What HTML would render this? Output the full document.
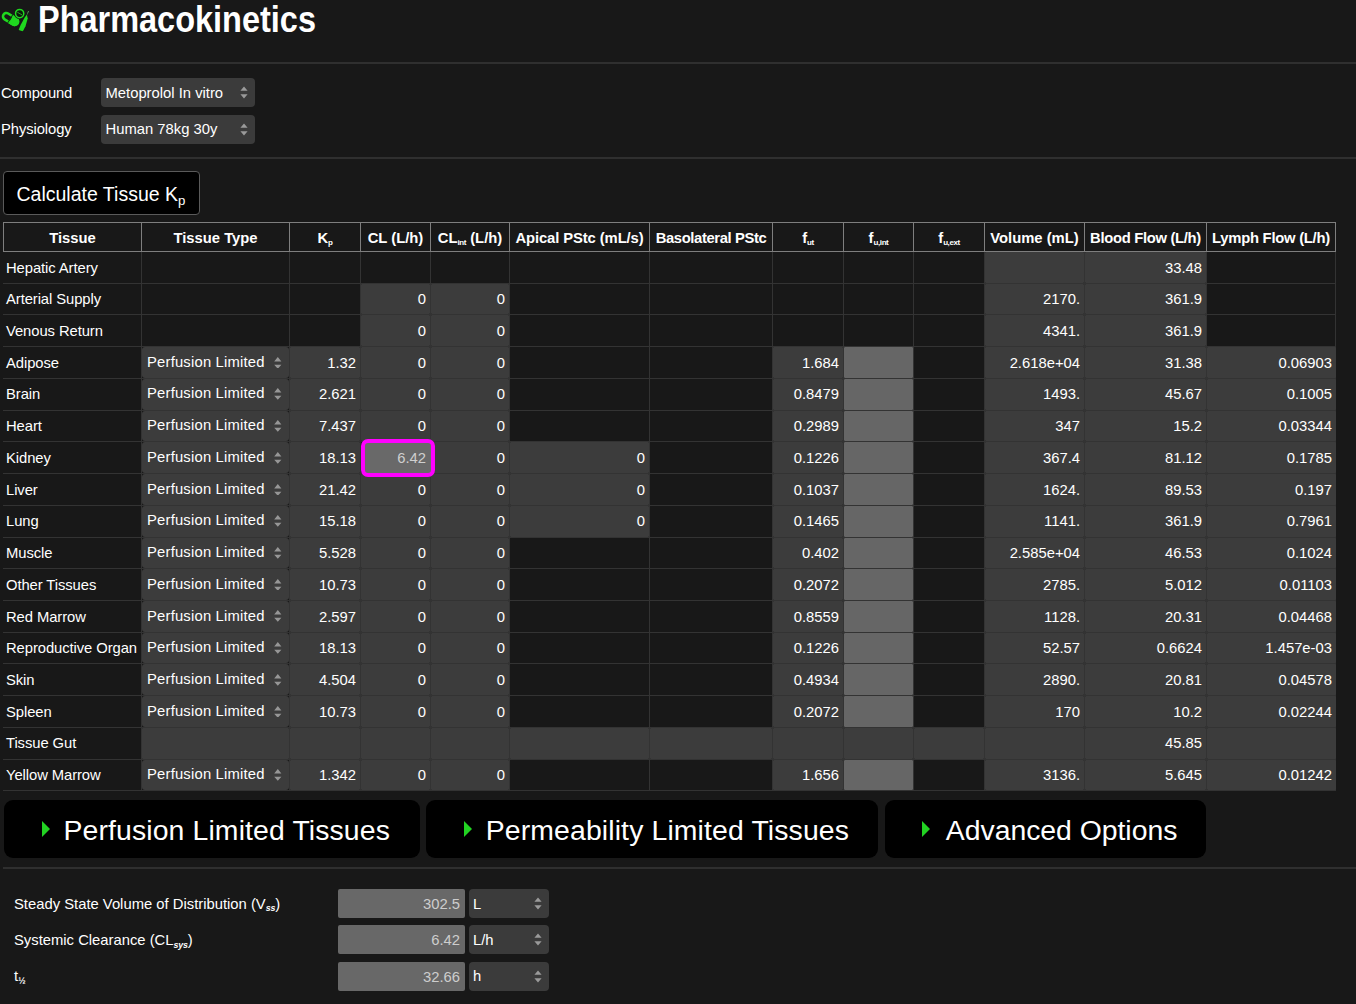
<!DOCTYPE html>
<html lang="en"><head><meta charset="utf-8"><title>Pharmacokinetics</title>
<style>
html,body{margin:0;padding:0;background:#181818;}
body{width:1356px;height:1004px;position:relative;overflow:hidden;color:#fff;font-family:"Liberation Sans",sans-serif;font-size:14.8px;}
*{box-sizing:border-box;}
.abs{position:absolute;}
h1{position:absolute;left:37.5px;top:0.2px;margin:0;font-size:36px;font-weight:bold;line-height:40px;white-space:nowrap;transform:scaleX(0.902);transform-origin:0 0;}
hr{position:absolute;left:0;width:1356px;height:2px;margin:0;border:0;background:#2f2f2f;}
label{position:absolute;white-space:nowrap;line-height:20px;}
.sel{position:absolute;background:#3b3b3b;border-radius:4px;line-height:20px;white-space:nowrap;}
.sel span{position:absolute;left:4.5px;top:50%;margin-top:-10px;}
.ar{position:absolute;width:8px;height:13px;fill:#9a9a9a;}
.btn{position:absolute;background:#000;border:1px solid #5a5a5a;border-radius:4px;font-size:19.5px;white-space:nowrap;}
sub{font-size:68%;vertical-align:baseline;position:relative;top:0.32em;letter-spacing:-0.3px;}
#grid{position:absolute;left:0;top:0;}
.gl{position:absolute;background:#333333;}
.hl{position:absolute;background:#7e7e7e;}
.c{position:absolute;white-space:nowrap;line-height:20px;overflow:hidden;}
.c.n{text-align:right;padding-right:4px;}
.c.t{padding-left:4px;}
.c.h{text-align:center;font-weight:bold;}
.c span{position:relative;}
.c.h sub{font-size:54%;letter-spacing:-0.4px;top:0.28em;}
label sub{font-size:60%;font-weight:bold;letter-spacing:-0.2px;}
.m{background:#3c3c3c;border-radius:1px;}
.l{background:#666666;border-radius:1px;}
.g{background:#3d3d3d;border-radius:1px;}
.big{position:absolute;top:800px;height:58px;background:#000;border-radius:9px;font-size:28.4px;line-height:58px;white-space:nowrap;}
.big i{position:absolute;top:21px;width:0;height:0;border-left:8px solid #22d322;border-top:8.5px solid transparent;border-bottom:8.5px solid transparent;}
.big span{position:absolute;top:0.5px;}
.inp{position:absolute;left:338px;width:127px;height:29px;background:#686868;border-radius:2px;color:#cdcdcd;text-align:right;padding-right:5px;line-height:31px;}
</style></head><body>
<svg class="abs" style="left:0;top:4px" width="32" height="30" viewBox="0 4 32 30">
<g transform="translate(10.5 18.95) rotate(31.7)">
<rect x="-8.25" y="-3.4" width="16.5" height="6.8" rx="3.4" fill="none" stroke="#1fd81f" stroke-width="2.6"/>
<path d="M0.4 -4.7 H4.85 A4.7 4.7 0 0 1 4.85 4.7 H0.4 Z" fill="#1fd81f"/>
<path d="M-0.3 -5 V5" stroke="#0c3a0c" stroke-width="0.9"/>
</g>
<circle cx="19.65" cy="13.55" r="5.5" fill="#181818"/>
<circle cx="19.65" cy="13.55" r="4.1" fill="#0a1c0a" stroke="#1fd81f" stroke-width="1.5"/>
<path d="M17.3 12.2 L22 14.9" stroke="#35a035" stroke-width="0.9"/>
<path d="M28.6 11 L26.9 15" stroke-width="0.8" stroke="#5fae5f"/>
<path d="M26.9 14.5 L27.7 18.5 L25.5 26.3 L23.3 30.6 L22.5 31.3 L18.7 29.9 L19.2 28.6 L20.6 25 L24.7 17.4 Z" fill="#1fd81f" stroke="#181818" stroke-width="1.2" paint-order="stroke"/>
</svg>
<h1>Pharmacokinetics</h1>
<hr style="top:62px">
<label style="left:1px;top:83px;letter-spacing:-0.15px">Compound</label>
<div class="sel" style="left:101px;top:78px;width:154px;height:29px"><span>Metoprolol In vitro</span><svg class="ar" style="right:7px;top:8px" viewBox="0 0 8 13"><path d="M4 0.4 L7.6 4.8 H0.4 Z M4 12.6 L0.4 8.2 H7.6 Z"/></svg></div>
<label style="left:1px;top:119.3px;letter-spacing:-0.1px">Physiology</label>
<div class="sel" style="left:101px;top:114.5px;width:154px;height:29px"><span>Human 78kg 30y</span><svg class="ar" style="right:7px;top:8px" viewBox="0 0 8 13"><path d="M4 0.4 L7.6 4.8 H0.4 Z M4 12.6 L0.4 8.2 H7.6 Z"/></svg></div>
<hr style="top:157px">
<div class="btn" style="left:3px;top:171px;width:197px;height:44px;line-height:44px;padding-left:12.5px">Calculate Tissue K<sub>p</sub></div>
<div id="grid">
<div class="gl" style="left:3px;top:282.73px;width:1333px;height:1px"></div><div class="gl" style="left:3px;top:314.46px;width:1333px;height:1px"></div><div class="gl" style="left:3px;top:346.19px;width:1333px;height:1px"></div><div class="gl" style="left:3px;top:377.92px;width:1333px;height:1px"></div><div class="gl" style="left:3px;top:409.65px;width:1333px;height:1px"></div><div class="gl" style="left:3px;top:441.38px;width:1333px;height:1px"></div><div class="gl" style="left:3px;top:473.11px;width:1333px;height:1px"></div><div class="gl" style="left:3px;top:504.84px;width:1333px;height:1px"></div><div class="gl" style="left:3px;top:536.57px;width:1333px;height:1px"></div><div class="gl" style="left:3px;top:568.3px;width:1333px;height:1px"></div><div class="gl" style="left:3px;top:600.03px;width:1333px;height:1px"></div><div class="gl" style="left:3px;top:631.76px;width:1333px;height:1px"></div><div class="gl" style="left:3px;top:663.49px;width:1333px;height:1px"></div><div class="gl" style="left:3px;top:695.22px;width:1333px;height:1px"></div><div class="gl" style="left:3px;top:726.95px;width:1333px;height:1px"></div><div class="gl" style="left:3px;top:758.68px;width:1333px;height:1px"></div><div class="gl" style="left:3px;top:790.41px;width:1333px;height:1px"></div><div class="gl" style="left:141px;top:251px;width:1px;height:539.41px"></div><div class="gl" style="left:289px;top:251px;width:1px;height:539.41px"></div><div class="gl" style="left:360px;top:251px;width:1px;height:539.41px"></div><div class="gl" style="left:430px;top:251px;width:1px;height:539.41px"></div><div class="gl" style="left:509px;top:251px;width:1px;height:539.41px"></div><div class="gl" style="left:649px;top:251px;width:1px;height:539.41px"></div><div class="gl" style="left:772px;top:251px;width:1px;height:539.41px"></div><div class="gl" style="left:843px;top:251px;width:1px;height:539.41px"></div><div class="gl" style="left:913px;top:251px;width:1px;height:539.41px"></div><div class="gl" style="left:984px;top:251px;width:1px;height:539.41px"></div><div class="gl" style="left:1084px;top:251px;width:1px;height:539.41px"></div><div class="gl" style="left:1206px;top:251px;width:1px;height:539.41px"></div><div class="gl" style="left:1335px;top:251px;width:1px;height:539.41px"></div>
<div class="hl" style="left:3px;top:222px;width:1333px;height:1px"></div><div class="hl" style="left:3px;top:251px;width:1333px;height:1px"></div><div class="hl" style="left:3px;top:222px;width:1px;height:30px"></div><div class="hl" style="left:141px;top:222px;width:1px;height:30px"></div><div class="hl" style="left:289px;top:222px;width:1px;height:30px"></div><div class="hl" style="left:360px;top:222px;width:1px;height:30px"></div><div class="hl" style="left:430px;top:222px;width:1px;height:30px"></div><div class="hl" style="left:509px;top:222px;width:1px;height:30px"></div><div class="hl" style="left:649px;top:222px;width:1px;height:30px"></div><div class="hl" style="left:772px;top:222px;width:1px;height:30px"></div><div class="hl" style="left:843px;top:222px;width:1px;height:30px"></div><div class="hl" style="left:913px;top:222px;width:1px;height:30px"></div><div class="hl" style="left:984px;top:222px;width:1px;height:30px"></div><div class="hl" style="left:1084px;top:222px;width:1px;height:30px"></div><div class="hl" style="left:1206px;top:222px;width:1px;height:30px"></div><div class="hl" style="left:1335px;top:222px;width:1px;height:30px"></div>
<div class="c h" style="left:4px;top:223px;width:137px;height:28px;padding-top:5px"><span>Tissue</span></div><div class="c h" style="left:142px;top:223px;width:147px;height:28px;padding-top:5px"><span>Tissue Type</span></div><div class="c h" style="left:290px;top:223px;width:70px;height:28px;padding-top:5px"><span>K<sub>p</sub></span></div><div class="c h" style="left:361px;top:223px;width:69px;height:28px;padding-top:5px"><span>CL (L/h)</span></div><div class="c h" style="left:431px;top:223px;width:78px;height:28px;padding-top:5px"><span>CL<sub>int</sub> (L/h)</span></div><div class="c h" style="left:510px;top:223px;width:139px;height:28px;padding-top:5px"><span><span style='letter-spacing:-0.1px'>Apical PStc (mL/s)</span></span></div><div class="c h" style="left:650px;top:223px;width:122px;height:28px;padding-top:5px"><span><span style='letter-spacing:-0.38px'>Basolateral PStc</span></span></div><div class="c h" style="left:773px;top:223px;width:70px;height:28px;padding-top:5px"><span>f<sub>ut</sub></span></div><div class="c h" style="left:844px;top:223px;width:69px;height:28px;padding-top:5px"><span>f<sub>u,int</sub></span></div><div class="c h" style="left:914px;top:223px;width:70px;height:28px;padding-top:5px"><span>f<sub>u,ext</sub></span></div><div class="c h" style="left:985px;top:223px;width:99px;height:28px;padding-top:5px"><span>Volume (mL)</span></div><div class="c h" style="left:1085px;top:223px;width:121px;height:28px;padding-top:5px"><span><span style='letter-spacing:-0.32px'>Blood Flow (L/h)</span></span></div><div class="c h" style="left:1207px;top:223px;width:128px;height:28px;padding-top:5px"><span><span style='letter-spacing:-0.25px'>Lymph Flow (L/h)</span></span></div>
<div class="c t" style="left:4px;top:252px;width:137px;height:30.73px;padding-top:5.5px;padding-left:2px;letter-spacing:-0.08px">Hepatic Artery</div><div class="c m n" style="left:985px;top:252px;width:99px;height:30.73px;padding-top:5.5px"></div><div class="c m n" style="left:1085px;top:252px;width:121px;height:30.73px;padding-top:5.5px">33.48</div>
<div class="c t" style="left:4px;top:283.73px;width:137px;height:30.73px;padding-top:5.5px;padding-left:2px;letter-spacing:-0.08px">Arterial Supply</div><div class="c m n" style="left:361px;top:283.73px;width:69px;height:30.73px;padding-top:5.5px">0</div><div class="c m n" style="left:431px;top:283.73px;width:78px;height:30.73px;padding-top:5.5px">0</div><div class="c m n" style="left:985px;top:283.73px;width:99px;height:30.73px;padding-top:5.5px">2170.</div><div class="c m n" style="left:1085px;top:283.73px;width:121px;height:30.73px;padding-top:5.5px">361.9</div>
<div class="c t" style="left:4px;top:315.46px;width:137px;height:30.73px;padding-top:5.5px;padding-left:2px;letter-spacing:-0.08px">Venous Return</div><div class="c m n" style="left:361px;top:315.46px;width:69px;height:30.73px;padding-top:5.5px">0</div><div class="c m n" style="left:431px;top:315.46px;width:78px;height:30.73px;padding-top:5.5px">0</div><div class="c m n" style="left:985px;top:315.46px;width:99px;height:30.73px;padding-top:5.5px">4341.</div><div class="c m n" style="left:1085px;top:315.46px;width:121px;height:30.73px;padding-top:5.5px">361.9</div>
<div class="c t" style="left:4px;top:347.19px;width:137px;height:30.73px;padding-top:5.5px;padding-left:2px;letter-spacing:-0.08px">Adipose</div><div class="c m t" style="left:142px;top:347.19px;width:147px;height:30.73px;border-radius:3px;padding-top:4.5px;padding-left:5px;letter-spacing:0.2px">Perfusion Limited<svg class="ar" style="right:7px;top:9.4px;width:7.6px;height:11.8px;fill:#969696" viewBox="0 0 7.6 11.8"><path d="M3.8 0 L7.4 4.4 H0.2 Z M3.8 11.8 L0.2 7.7 H7.4 Z"/></svg></div><div class="c m n" style="left:290px;top:347.19px;width:70px;height:30.73px;padding-top:5.5px">1.32</div><div class="c m n" style="left:361px;top:347.19px;width:69px;height:30.73px;padding-top:5.5px">0</div><div class="c m n" style="left:431px;top:347.19px;width:78px;height:30.73px;padding-top:5.5px">0</div><div class="c m n" style="left:773px;top:347.19px;width:70px;height:30.73px;padding-top:5.5px">1.684</div><div class="c l" style="left:844px;top:347.19px;width:69px;height:30.73px;"></div><div class="c m n" style="left:985px;top:347.19px;width:99px;height:30.73px;padding-top:5.5px">2.618e+04</div><div class="c m n" style="left:1085px;top:347.19px;width:121px;height:30.73px;padding-top:5.5px">31.38</div><div class="c m n" style="left:1207px;top:347.19px;width:129px;height:30.73px;padding-top:5.5px">0.06903</div>
<div class="c t" style="left:4px;top:378.92px;width:137px;height:30.73px;padding-top:5.5px;padding-left:2px;letter-spacing:-0.08px">Brain</div><div class="c m t" style="left:142px;top:378.92px;width:147px;height:30.73px;border-radius:3px;padding-top:4.5px;padding-left:5px;letter-spacing:0.2px">Perfusion Limited<svg class="ar" style="right:7px;top:9.4px;width:7.6px;height:11.8px;fill:#969696" viewBox="0 0 7.6 11.8"><path d="M3.8 0 L7.4 4.4 H0.2 Z M3.8 11.8 L0.2 7.7 H7.4 Z"/></svg></div><div class="c m n" style="left:290px;top:378.92px;width:70px;height:30.73px;padding-top:5.5px">2.621</div><div class="c m n" style="left:361px;top:378.92px;width:69px;height:30.73px;padding-top:5.5px">0</div><div class="c m n" style="left:431px;top:378.92px;width:78px;height:30.73px;padding-top:5.5px">0</div><div class="c m n" style="left:773px;top:378.92px;width:70px;height:30.73px;padding-top:5.5px">0.8479</div><div class="c l" style="left:844px;top:378.92px;width:69px;height:30.73px;"></div><div class="c m n" style="left:985px;top:378.92px;width:99px;height:30.73px;padding-top:5.5px">1493.</div><div class="c m n" style="left:1085px;top:378.92px;width:121px;height:30.73px;padding-top:5.5px">45.67</div><div class="c m n" style="left:1207px;top:378.92px;width:129px;height:30.73px;padding-top:5.5px">0.1005</div>
<div class="c t" style="left:4px;top:410.65px;width:137px;height:30.73px;padding-top:5.5px;padding-left:2px;letter-spacing:-0.08px">Heart</div><div class="c m t" style="left:142px;top:410.65px;width:147px;height:30.73px;border-radius:3px;padding-top:4.5px;padding-left:5px;letter-spacing:0.2px">Perfusion Limited<svg class="ar" style="right:7px;top:9.4px;width:7.6px;height:11.8px;fill:#969696" viewBox="0 0 7.6 11.8"><path d="M3.8 0 L7.4 4.4 H0.2 Z M3.8 11.8 L0.2 7.7 H7.4 Z"/></svg></div><div class="c m n" style="left:290px;top:410.65px;width:70px;height:30.73px;padding-top:5.5px">7.437</div><div class="c m n" style="left:361px;top:410.65px;width:69px;height:30.73px;padding-top:5.5px">0</div><div class="c m n" style="left:431px;top:410.65px;width:78px;height:30.73px;padding-top:5.5px">0</div><div class="c m n" style="left:773px;top:410.65px;width:70px;height:30.73px;padding-top:5.5px">0.2989</div><div class="c l" style="left:844px;top:410.65px;width:69px;height:30.73px;"></div><div class="c m n" style="left:985px;top:410.65px;width:99px;height:30.73px;padding-top:5.5px">347</div><div class="c m n" style="left:1085px;top:410.65px;width:121px;height:30.73px;padding-top:5.5px">15.2</div><div class="c m n" style="left:1207px;top:410.65px;width:129px;height:30.73px;padding-top:5.5px">0.03344</div>
<div class="c t" style="left:4px;top:442.38px;width:137px;height:30.73px;padding-top:5.5px;padding-left:2px;letter-spacing:-0.08px">Kidney</div><div class="c m t" style="left:142px;top:442.38px;width:147px;height:30.73px;border-radius:3px;padding-top:4.5px;padding-left:5px;letter-spacing:0.2px">Perfusion Limited<svg class="ar" style="right:7px;top:9.4px;width:7.6px;height:11.8px;fill:#969696" viewBox="0 0 7.6 11.8"><path d="M3.8 0 L7.4 4.4 H0.2 Z M3.8 11.8 L0.2 7.7 H7.4 Z"/></svg></div><div class="c m n" style="left:290px;top:442.38px;width:70px;height:30.73px;padding-top:5.5px">18.13</div><div class="c n" style="left:361px;top:439.08px;width:74px;height:38px;border:4px solid #ff00ff;border-radius:7px;background:#696969;color:#cfcfcf;padding-top:5px;padding-right:5px;z-index:3">6.42</div><div class="c m n" style="left:431px;top:442.38px;width:78px;height:30.73px;padding-top:5.5px">0</div><div class="c m n" style="left:510px;top:442.38px;width:139px;height:30.73px;padding-top:5.5px">0</div><div class="c m n" style="left:773px;top:442.38px;width:70px;height:30.73px;padding-top:5.5px">0.1226</div><div class="c l" style="left:844px;top:442.38px;width:69px;height:30.73px;"></div><div class="c m n" style="left:985px;top:442.38px;width:99px;height:30.73px;padding-top:5.5px">367.4</div><div class="c m n" style="left:1085px;top:442.38px;width:121px;height:30.73px;padding-top:5.5px">81.12</div><div class="c m n" style="left:1207px;top:442.38px;width:129px;height:30.73px;padding-top:5.5px">0.1785</div>
<div class="c t" style="left:4px;top:474.11px;width:137px;height:30.73px;padding-top:5.5px;padding-left:2px;letter-spacing:-0.08px">Liver</div><div class="c m t" style="left:142px;top:474.11px;width:147px;height:30.73px;border-radius:3px;padding-top:4.5px;padding-left:5px;letter-spacing:0.2px">Perfusion Limited<svg class="ar" style="right:7px;top:9.4px;width:7.6px;height:11.8px;fill:#969696" viewBox="0 0 7.6 11.8"><path d="M3.8 0 L7.4 4.4 H0.2 Z M3.8 11.8 L0.2 7.7 H7.4 Z"/></svg></div><div class="c m n" style="left:290px;top:474.11px;width:70px;height:30.73px;padding-top:5.5px">21.42</div><div class="c m n" style="left:361px;top:474.11px;width:69px;height:30.73px;padding-top:5.5px">0</div><div class="c m n" style="left:431px;top:474.11px;width:78px;height:30.73px;padding-top:5.5px">0</div><div class="c m n" style="left:510px;top:474.11px;width:139px;height:30.73px;padding-top:5.5px">0</div><div class="c m n" style="left:773px;top:474.11px;width:70px;height:30.73px;padding-top:5.5px">0.1037</div><div class="c l" style="left:844px;top:474.11px;width:69px;height:30.73px;"></div><div class="c m n" style="left:985px;top:474.11px;width:99px;height:30.73px;padding-top:5.5px">1624.</div><div class="c m n" style="left:1085px;top:474.11px;width:121px;height:30.73px;padding-top:5.5px">89.53</div><div class="c m n" style="left:1207px;top:474.11px;width:129px;height:30.73px;padding-top:5.5px">0.197</div>
<div class="c t" style="left:4px;top:505.84px;width:137px;height:30.73px;padding-top:5.5px;padding-left:2px;letter-spacing:-0.08px">Lung</div><div class="c m t" style="left:142px;top:505.84px;width:147px;height:30.73px;border-radius:3px;padding-top:4.5px;padding-left:5px;letter-spacing:0.2px">Perfusion Limited<svg class="ar" style="right:7px;top:9.4px;width:7.6px;height:11.8px;fill:#969696" viewBox="0 0 7.6 11.8"><path d="M3.8 0 L7.4 4.4 H0.2 Z M3.8 11.8 L0.2 7.7 H7.4 Z"/></svg></div><div class="c m n" style="left:290px;top:505.84px;width:70px;height:30.73px;padding-top:5.5px">15.18</div><div class="c m n" style="left:361px;top:505.84px;width:69px;height:30.73px;padding-top:5.5px">0</div><div class="c m n" style="left:431px;top:505.84px;width:78px;height:30.73px;padding-top:5.5px">0</div><div class="c m n" style="left:510px;top:505.84px;width:139px;height:30.73px;padding-top:5.5px">0</div><div class="c m n" style="left:773px;top:505.84px;width:70px;height:30.73px;padding-top:5.5px">0.1465</div><div class="c l" style="left:844px;top:505.84px;width:69px;height:30.73px;"></div><div class="c m n" style="left:985px;top:505.84px;width:99px;height:30.73px;padding-top:5.5px">1141.</div><div class="c m n" style="left:1085px;top:505.84px;width:121px;height:30.73px;padding-top:5.5px">361.9</div><div class="c m n" style="left:1207px;top:505.84px;width:129px;height:30.73px;padding-top:5.5px">0.7961</div>
<div class="c t" style="left:4px;top:537.57px;width:137px;height:30.73px;padding-top:5.5px;padding-left:2px;letter-spacing:-0.08px">Muscle</div><div class="c m t" style="left:142px;top:537.57px;width:147px;height:30.73px;border-radius:3px;padding-top:4.5px;padding-left:5px;letter-spacing:0.2px">Perfusion Limited<svg class="ar" style="right:7px;top:9.4px;width:7.6px;height:11.8px;fill:#969696" viewBox="0 0 7.6 11.8"><path d="M3.8 0 L7.4 4.4 H0.2 Z M3.8 11.8 L0.2 7.7 H7.4 Z"/></svg></div><div class="c m n" style="left:290px;top:537.57px;width:70px;height:30.73px;padding-top:5.5px">5.528</div><div class="c m n" style="left:361px;top:537.57px;width:69px;height:30.73px;padding-top:5.5px">0</div><div class="c m n" style="left:431px;top:537.57px;width:78px;height:30.73px;padding-top:5.5px">0</div><div class="c m n" style="left:773px;top:537.57px;width:70px;height:30.73px;padding-top:5.5px">0.402</div><div class="c l" style="left:844px;top:537.57px;width:69px;height:30.73px;"></div><div class="c m n" style="left:985px;top:537.57px;width:99px;height:30.73px;padding-top:5.5px">2.585e+04</div><div class="c m n" style="left:1085px;top:537.57px;width:121px;height:30.73px;padding-top:5.5px">46.53</div><div class="c m n" style="left:1207px;top:537.57px;width:129px;height:30.73px;padding-top:5.5px">0.1024</div>
<div class="c t" style="left:4px;top:569.3px;width:137px;height:30.73px;padding-top:5.5px;padding-left:2px;letter-spacing:-0.08px">Other Tissues</div><div class="c m t" style="left:142px;top:569.3px;width:147px;height:30.73px;border-radius:3px;padding-top:4.5px;padding-left:5px;letter-spacing:0.2px">Perfusion Limited<svg class="ar" style="right:7px;top:9.4px;width:7.6px;height:11.8px;fill:#969696" viewBox="0 0 7.6 11.8"><path d="M3.8 0 L7.4 4.4 H0.2 Z M3.8 11.8 L0.2 7.7 H7.4 Z"/></svg></div><div class="c m n" style="left:290px;top:569.3px;width:70px;height:30.73px;padding-top:5.5px">10.73</div><div class="c m n" style="left:361px;top:569.3px;width:69px;height:30.73px;padding-top:5.5px">0</div><div class="c m n" style="left:431px;top:569.3px;width:78px;height:30.73px;padding-top:5.5px">0</div><div class="c m n" style="left:773px;top:569.3px;width:70px;height:30.73px;padding-top:5.5px">0.2072</div><div class="c l" style="left:844px;top:569.3px;width:69px;height:30.73px;"></div><div class="c m n" style="left:985px;top:569.3px;width:99px;height:30.73px;padding-top:5.5px">2785.</div><div class="c m n" style="left:1085px;top:569.3px;width:121px;height:30.73px;padding-top:5.5px">5.012</div><div class="c m n" style="left:1207px;top:569.3px;width:129px;height:30.73px;padding-top:5.5px">0.01103</div>
<div class="c t" style="left:4px;top:601.03px;width:137px;height:30.73px;padding-top:5.5px;padding-left:2px;letter-spacing:-0.08px">Red Marrow</div><div class="c m t" style="left:142px;top:601.03px;width:147px;height:30.73px;border-radius:3px;padding-top:4.5px;padding-left:5px;letter-spacing:0.2px">Perfusion Limited<svg class="ar" style="right:7px;top:9.4px;width:7.6px;height:11.8px;fill:#969696" viewBox="0 0 7.6 11.8"><path d="M3.8 0 L7.4 4.4 H0.2 Z M3.8 11.8 L0.2 7.7 H7.4 Z"/></svg></div><div class="c m n" style="left:290px;top:601.03px;width:70px;height:30.73px;padding-top:5.5px">2.597</div><div class="c m n" style="left:361px;top:601.03px;width:69px;height:30.73px;padding-top:5.5px">0</div><div class="c m n" style="left:431px;top:601.03px;width:78px;height:30.73px;padding-top:5.5px">0</div><div class="c m n" style="left:773px;top:601.03px;width:70px;height:30.73px;padding-top:5.5px">0.8559</div><div class="c l" style="left:844px;top:601.03px;width:69px;height:30.73px;"></div><div class="c m n" style="left:985px;top:601.03px;width:99px;height:30.73px;padding-top:5.5px">1128.</div><div class="c m n" style="left:1085px;top:601.03px;width:121px;height:30.73px;padding-top:5.5px">20.31</div><div class="c m n" style="left:1207px;top:601.03px;width:129px;height:30.73px;padding-top:5.5px">0.04468</div>
<div class="c t" style="left:4px;top:632.76px;width:137px;height:30.73px;padding-top:5.5px;padding-left:2px;letter-spacing:-0.08px">Reproductive Organ</div><div class="c m t" style="left:142px;top:632.76px;width:147px;height:30.73px;border-radius:3px;padding-top:4.5px;padding-left:5px;letter-spacing:0.2px">Perfusion Limited<svg class="ar" style="right:7px;top:9.4px;width:7.6px;height:11.8px;fill:#969696" viewBox="0 0 7.6 11.8"><path d="M3.8 0 L7.4 4.4 H0.2 Z M3.8 11.8 L0.2 7.7 H7.4 Z"/></svg></div><div class="c m n" style="left:290px;top:632.76px;width:70px;height:30.73px;padding-top:5.5px">18.13</div><div class="c m n" style="left:361px;top:632.76px;width:69px;height:30.73px;padding-top:5.5px">0</div><div class="c m n" style="left:431px;top:632.76px;width:78px;height:30.73px;padding-top:5.5px">0</div><div class="c m n" style="left:773px;top:632.76px;width:70px;height:30.73px;padding-top:5.5px">0.1226</div><div class="c l" style="left:844px;top:632.76px;width:69px;height:30.73px;"></div><div class="c m n" style="left:985px;top:632.76px;width:99px;height:30.73px;padding-top:5.5px">52.57</div><div class="c m n" style="left:1085px;top:632.76px;width:121px;height:30.73px;padding-top:5.5px">0.6624</div><div class="c m n" style="left:1207px;top:632.76px;width:129px;height:30.73px;padding-top:5.5px">1.457e-03</div>
<div class="c t" style="left:4px;top:664.49px;width:137px;height:30.73px;padding-top:5.5px;padding-left:2px;letter-spacing:-0.08px">Skin</div><div class="c m t" style="left:142px;top:664.49px;width:147px;height:30.73px;border-radius:3px;padding-top:4.5px;padding-left:5px;letter-spacing:0.2px">Perfusion Limited<svg class="ar" style="right:7px;top:9.4px;width:7.6px;height:11.8px;fill:#969696" viewBox="0 0 7.6 11.8"><path d="M3.8 0 L7.4 4.4 H0.2 Z M3.8 11.8 L0.2 7.7 H7.4 Z"/></svg></div><div class="c m n" style="left:290px;top:664.49px;width:70px;height:30.73px;padding-top:5.5px">4.504</div><div class="c m n" style="left:361px;top:664.49px;width:69px;height:30.73px;padding-top:5.5px">0</div><div class="c m n" style="left:431px;top:664.49px;width:78px;height:30.73px;padding-top:5.5px">0</div><div class="c m n" style="left:773px;top:664.49px;width:70px;height:30.73px;padding-top:5.5px">0.4934</div><div class="c l" style="left:844px;top:664.49px;width:69px;height:30.73px;"></div><div class="c m n" style="left:985px;top:664.49px;width:99px;height:30.73px;padding-top:5.5px">2890.</div><div class="c m n" style="left:1085px;top:664.49px;width:121px;height:30.73px;padding-top:5.5px">20.81</div><div class="c m n" style="left:1207px;top:664.49px;width:129px;height:30.73px;padding-top:5.5px">0.04578</div>
<div class="c t" style="left:4px;top:696.22px;width:137px;height:30.73px;padding-top:5.5px;padding-left:2px;letter-spacing:-0.08px">Spleen</div><div class="c m t" style="left:142px;top:696.22px;width:147px;height:30.73px;border-radius:3px;padding-top:4.5px;padding-left:5px;letter-spacing:0.2px">Perfusion Limited<svg class="ar" style="right:7px;top:9.4px;width:7.6px;height:11.8px;fill:#969696" viewBox="0 0 7.6 11.8"><path d="M3.8 0 L7.4 4.4 H0.2 Z M3.8 11.8 L0.2 7.7 H7.4 Z"/></svg></div><div class="c m n" style="left:290px;top:696.22px;width:70px;height:30.73px;padding-top:5.5px">10.73</div><div class="c m n" style="left:361px;top:696.22px;width:69px;height:30.73px;padding-top:5.5px">0</div><div class="c m n" style="left:431px;top:696.22px;width:78px;height:30.73px;padding-top:5.5px">0</div><div class="c m n" style="left:773px;top:696.22px;width:70px;height:30.73px;padding-top:5.5px">0.2072</div><div class="c l" style="left:844px;top:696.22px;width:69px;height:30.73px;"></div><div class="c m n" style="left:985px;top:696.22px;width:99px;height:30.73px;padding-top:5.5px">170</div><div class="c m n" style="left:1085px;top:696.22px;width:121px;height:30.73px;padding-top:5.5px">10.2</div><div class="c m n" style="left:1207px;top:696.22px;width:129px;height:30.73px;padding-top:5.5px">0.02244</div>
<div class="c t" style="left:4px;top:727.95px;width:137px;height:30.73px;padding-top:5.5px;padding-left:2px;letter-spacing:-0.08px">Tissue Gut</div><div class="c m n" style="left:142px;top:727.95px;width:147px;height:30.73px;padding-top:5.5px"></div><div class="c m n" style="left:290px;top:727.95px;width:70px;height:30.73px;padding-top:5.5px"></div><div class="c m n" style="left:361px;top:727.95px;width:69px;height:30.73px;padding-top:5.5px"></div><div class="c m n" style="left:431px;top:727.95px;width:78px;height:30.73px;padding-top:5.5px"></div><div class="c m n" style="left:510px;top:727.95px;width:139px;height:30.73px;padding-top:5.5px"></div><div class="c m n" style="left:650px;top:727.95px;width:122px;height:30.73px;padding-top:5.5px"></div><div class="c m n" style="left:773px;top:727.95px;width:70px;height:30.73px;padding-top:5.5px"></div><div class="c g" style="left:844px;top:727.95px;width:69px;height:30.73px;"></div><div class="c m n" style="left:914px;top:727.95px;width:70px;height:30.73px;padding-top:5.5px"></div><div class="c m n" style="left:985px;top:727.95px;width:99px;height:30.73px;padding-top:5.5px"></div><div class="c m n" style="left:1085px;top:727.95px;width:121px;height:30.73px;padding-top:5.5px">45.85</div><div class="c m n" style="left:1207px;top:727.95px;width:129px;height:30.73px;padding-top:5.5px"></div>
<div class="c t" style="left:4px;top:759.68px;width:137px;height:30.73px;padding-top:5.5px;padding-left:2px;letter-spacing:-0.08px">Yellow Marrow</div><div class="c m t" style="left:142px;top:759.68px;width:147px;height:30.73px;border-radius:3px;padding-top:4.5px;padding-left:5px;letter-spacing:0.2px">Perfusion Limited<svg class="ar" style="right:7px;top:9.4px;width:7.6px;height:11.8px;fill:#969696" viewBox="0 0 7.6 11.8"><path d="M3.8 0 L7.4 4.4 H0.2 Z M3.8 11.8 L0.2 7.7 H7.4 Z"/></svg></div><div class="c m n" style="left:290px;top:759.68px;width:70px;height:30.73px;padding-top:5.5px">1.342</div><div class="c m n" style="left:361px;top:759.68px;width:69px;height:30.73px;padding-top:5.5px">0</div><div class="c m n" style="left:431px;top:759.68px;width:78px;height:30.73px;padding-top:5.5px">0</div><div class="c m n" style="left:773px;top:759.68px;width:70px;height:30.73px;padding-top:5.5px">1.656</div><div class="c l" style="left:844px;top:759.68px;width:69px;height:30.73px;"></div><div class="c m n" style="left:985px;top:759.68px;width:99px;height:30.73px;padding-top:5.5px">3136.</div><div class="c m n" style="left:1085px;top:759.68px;width:121px;height:30.73px;padding-top:5.5px">5.645</div><div class="c m n" style="left:1207px;top:759.68px;width:129px;height:30.73px;padding-top:5.5px">0.01242</div>
</div>
<div class="big" style="left:4px;width:415.5px"><i style="left:38px"></i><span style="left:59.5px;letter-spacing:0.12px">Perfusion Limited Tissues</span></div>
<div class="big" style="left:426px;width:451.5px"><i style="left:38px"></i><span style="left:59.7px;letter-spacing:0.13px">Permeability Limited Tissues</span></div>
<div class="big" style="left:885px;width:320.5px"><i style="left:36.5px"></i><span style="left:60.8px;letter-spacing:-0.03px">Advanced Options</span></div>
<hr style="top:867px;left:3px;width:1353px">
<label style="left:14px;top:893.5px">Steady State Volume of Distribution (V<sub><i>ss</i></sub>)</label><div class="inp" style="top:889px">302.5</div><div class="sel" style="left:468.5px;top:889px;width:80px;height:29px"><span>L</span><svg class="ar" style="right:6.6px;top:8px" viewBox="0 0 8 13"><path d="M4 0.4 L7.6 4.8 H0.4 Z M4 12.6 L0.4 8.2 H7.6 Z"/></svg></div>
<label style="left:14px;top:929.9px">Systemic Clearance (CL<sub><i>sys</i></sub>)</label><div class="inp" style="top:925.4px">6.42</div><div class="sel" style="left:468.5px;top:925.4px;width:80px;height:29px"><span>L/h</span><svg class="ar" style="right:6.6px;top:8px" viewBox="0 0 8 13"><path d="M4 0.4 L7.6 4.8 H0.4 Z M4 12.6 L0.4 8.2 H7.6 Z"/></svg></div>
<label style="left:14px;top:966.3px">t<sub>½</sub></label><div class="inp" style="top:961.8px">32.66</div><div class="sel" style="left:468.5px;top:961.8px;width:80px;height:29px"><span>h</span><svg class="ar" style="right:6.6px;top:8px" viewBox="0 0 8 13"><path d="M4 0.4 L7.6 4.8 H0.4 Z M4 12.6 L0.4 8.2 H7.6 Z"/></svg></div>
</body></html>
